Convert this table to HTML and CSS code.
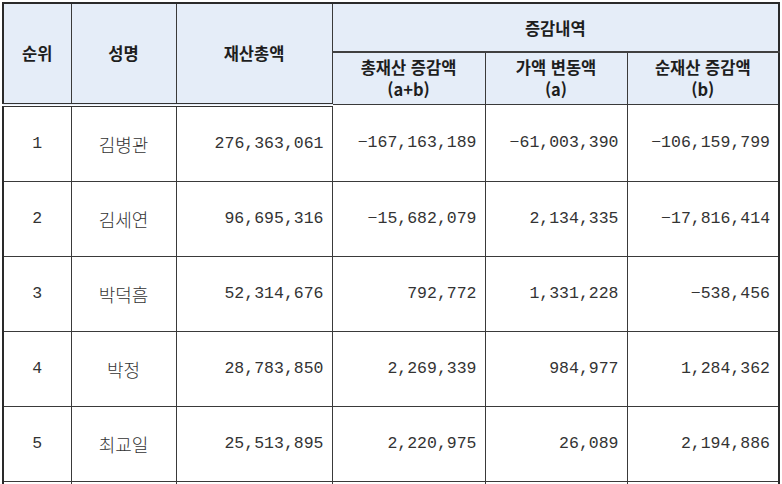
FILE: index.html
```html
<!DOCTYPE html>
<html lang="ko">
<head>
<meta charset="utf-8">
<link rel="stylesheet" href="styles.css">
</head>
<body>
<table class="tbl">
  <colgroup>
    <col class="c1"><col class="c2"><col class="c3"><col class="c4"><col class="c5"><col class="c6">
  </colgroup>
  <thead>
    <tr class="h1">
      <th rowspan="2" class="hb">순위</th>
      <th rowspan="2" class="hb">성명</th>
      <th rowspan="2" class="hb">재산총액</th>
      <th colspan="3" class="hs">증감내역</th>
    </tr>
    <tr class="h2">
      <th class="hs hb">총재산 증감액<br>(a+b)</th>
      <th class="hs hb">가액 변동액<br>(a)</th>
      <th class="hs hb">순재산 증감액<br>(b)</th>
    </tr>
  </thead>
  <tbody>
    <tr><td class="ctr">1</td><td class="ctr nm">김병관</td><td class="num">276,363,061</td><td class="num">−167,163,189</td><td class="num">−61,003,390</td><td class="num">−106,159,799</td></tr>
    <tr><td class="ctr">2</td><td class="ctr nm">김세연</td><td class="num">96,695,316</td><td class="num">−15,682,079</td><td class="num">2,134,335</td><td class="num">−17,816,414</td></tr>
    <tr><td class="ctr">3</td><td class="ctr nm">박덕흠</td><td class="num">52,314,676</td><td class="num">792,772</td><td class="num">1,331,228</td><td class="num">−538,456</td></tr>
    <tr><td class="ctr">4</td><td class="ctr nm">박정</td><td class="num">28,783,850</td><td class="num">2,269,339</td><td class="num">984,977</td><td class="num">1,284,362</td></tr>
    <tr><td class="ctr">5</td><td class="ctr nm">최교일</td><td class="num">25,513,895</td><td class="num">2,220,975</td><td class="num">26,089</td><td class="num">2,194,886</td></tr>
    <tr><td></td><td></td><td></td><td></td><td></td><td></td></tr>
  </tbody>
</table>
</body>
</html>
```
FILE: styles.css
```css
html, body {
  margin: 0;
  padding: 0;
  background: #ffffff;
  overflow: hidden;
  height: 484px;
}
.tbl {
  margin: 2px 0 0 2px;
  border-collapse: collapse;
  table-layout: fixed;
  width: 776px;
  border: 2px solid #2a2a2a;
  font-family: "Liberation Mono", "Noto Sans CJK KR", monospace;
  color: #222;
}
.c1 { width: 68px; }
.c2 { width: 105px; }
.c3 { width: 156px; }
.c4 { width: 153px; }
.c5 { width: 142px; }
.c6 { width: 152px; }
th {
  background: #e5edf8;
  font-family: "Noto Sans CJK KR", sans-serif;
  font-weight: 700;
  font-size: 16.5px;
  color: #1e1e1e;
  border: 1px solid #3a3a3a;
  padding: 0;
  line-height: 22px;
}
.h1 th { height: 47px; }
.h2 th.hs { padding-top: 3px; height: 48px; vertical-align: top; }
th.hs { border-bottom: 2px solid #404040; }
.h2 th.hs { border-bottom: none; border-top: 2px solid #404040; }
th.hb { border-bottom: 4px double #333; }
td {
  border: 1px solid #3a3a3a;
  height: 74px;
  padding: 0;
  font-size: 16.5px;
  color: #333;
}
.ctr { text-align: center; }
.nm { font-size: 18px; font-weight: 300; }
.num { text-align: right; padding-right: 8px; }
```
